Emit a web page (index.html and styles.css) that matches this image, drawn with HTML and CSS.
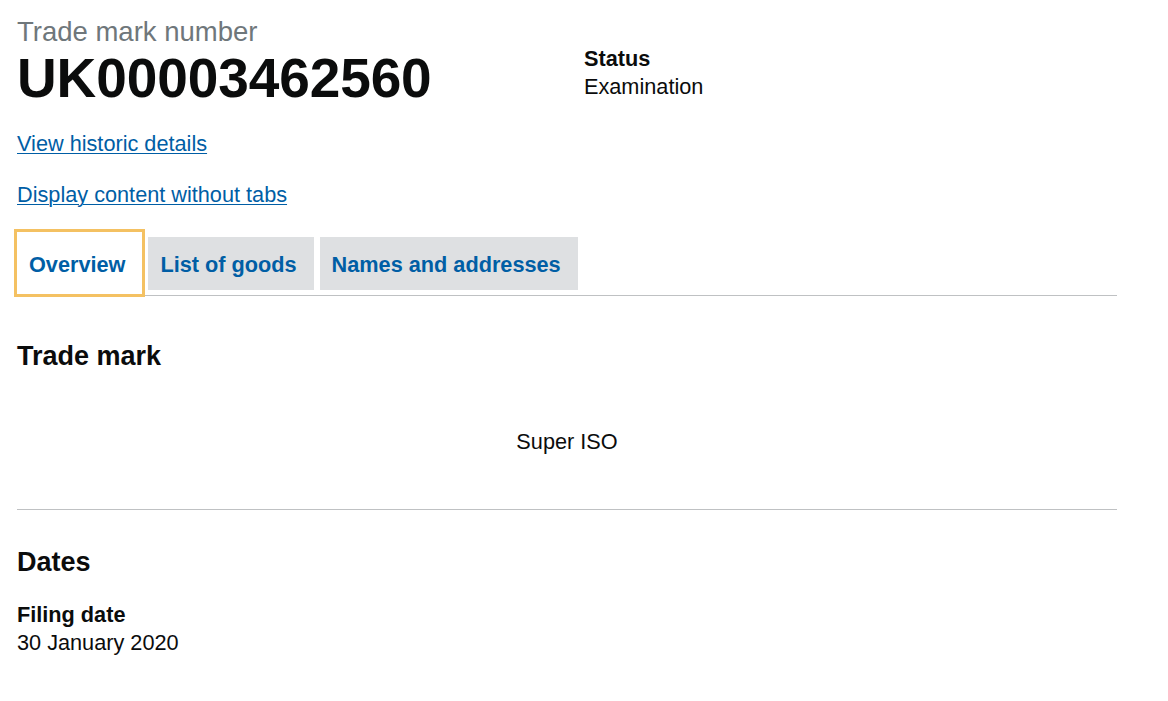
FILE: index.html
```html
<!DOCTYPE html>
<html lang="en">
<head>
<meta charset="utf-8">
<title>Trade mark UK00003462560</title>
<link rel="stylesheet" href="styles.css">
</head>
<body>
<main class="page">
  <div class="header-row">
    <div class="header-main">
      <span class="caption">Trade mark number</span>
      <h1 class="title">UK00003462560</h1>
    </div>
    <div class="header-side">
      <div class="label">Status</div>
      <div class="value">Examination</div>
    </div>
  </div>

  <p class="link-para link-first"><a class="link" href="#">View historic details</a></p>
  <p class="link-para link-second"><a class="link" href="#">Display content without tabs</a></p>

  <ul class="tabs">
    <li class="tab tab-selected"><a href="#">Overview</a></li>
    <li class="tab"><a href="#">List of goods</a></li>
    <li class="tab"><a href="#">Names and addresses</a></li>
  </ul>

  <section class="panel">
    <h2 class="section-title">Trade mark</h2>
    <p class="mark-text">Super ISO</p>
    <hr class="rule">
    <h2 class="section-title dates-title">Dates</h2>
    <div class="label filing-label">Filing date</div>
    <div class="value">30 January 2020</div>
  </section>
</main>
</body>
</html>
```

FILE: styles.css
```css
html, body {
  margin: 0;
  padding: 0;
  background: #ffffff;
}

body {
  font-family: "Liberation Sans", Arial, sans-serif;
  color: #0b0c0c;
}

.page {
  width: 1100px;
  padding: 17px 0 0 17px;
}

.header-row {
  display: flex;
}

.header-main {
  width: 550px;
}

.header-side {
  padding-left: 17px;
  padding-top: 28px;
}

.caption {
  display: block;
  font-size: 27.5px;
  line-height: 30px;
  color: #6f777b;
}

.title {
  margin: 1px 0 0 0;
  font-size: 55px;
  line-height: 60px;
  font-weight: 700;
  letter-spacing: -0.1px;
}

.label {
  font-size: 21.7px;
  line-height: 28px;
  font-weight: 700;
}

.value {
  font-size: 21.7px;
  line-height: 28px;
}

.link-para {
  margin: 0;
  font-size: 21.7px;
  line-height: 25px;
}

.link-first {
  margin-top: 23px;
}

.link-second {
  margin-top: 26px;
}

.link {
  color: #005ea5;
  text-decoration: underline;
  text-underline-offset: 2px;
  text-decoration-thickness: 1px;
}

.tabs {
  list-style: none;
  margin: 25px 0 0 0;
  padding: 0;
  display: flex;
  align-items: flex-end;
  gap: 6px;
  border-bottom: 1px solid #bfc1c3;
}

.tab {
  background: #dee0e2;
  padding: 15px 17px 13px 12px;
  margin-bottom: 5px;
  font-size: 21.7px;
  line-height: 25px;
  font-weight: 700;
}

.tab a {
  color: #005ea5;
  text-decoration: none;
}

.tab-selected {
  background: #ffffff;
  padding: 20px 17px 17px 12px;
  margin-bottom: 1px;
  outline: 3px solid #f4c162;
}

.panel {
  padding-top: 45px;
}

.section-title {
  margin: 0;
  font-size: 27px;
  line-height: 30px;
  font-weight: 700;
}

.mark-text {
  margin: 58px 0 0 0;
  text-align: center;
  font-size: 21.7px;
  line-height: 25px;
}

.rule {
  margin: 55px 0 0 0;
  border: 0;
  border-top: 1px solid #bfc1c3;
  height: 0;
}

.dates-title {
  margin-top: 37px;
}

.filing-label {
  margin-top: 24px;
}
```
